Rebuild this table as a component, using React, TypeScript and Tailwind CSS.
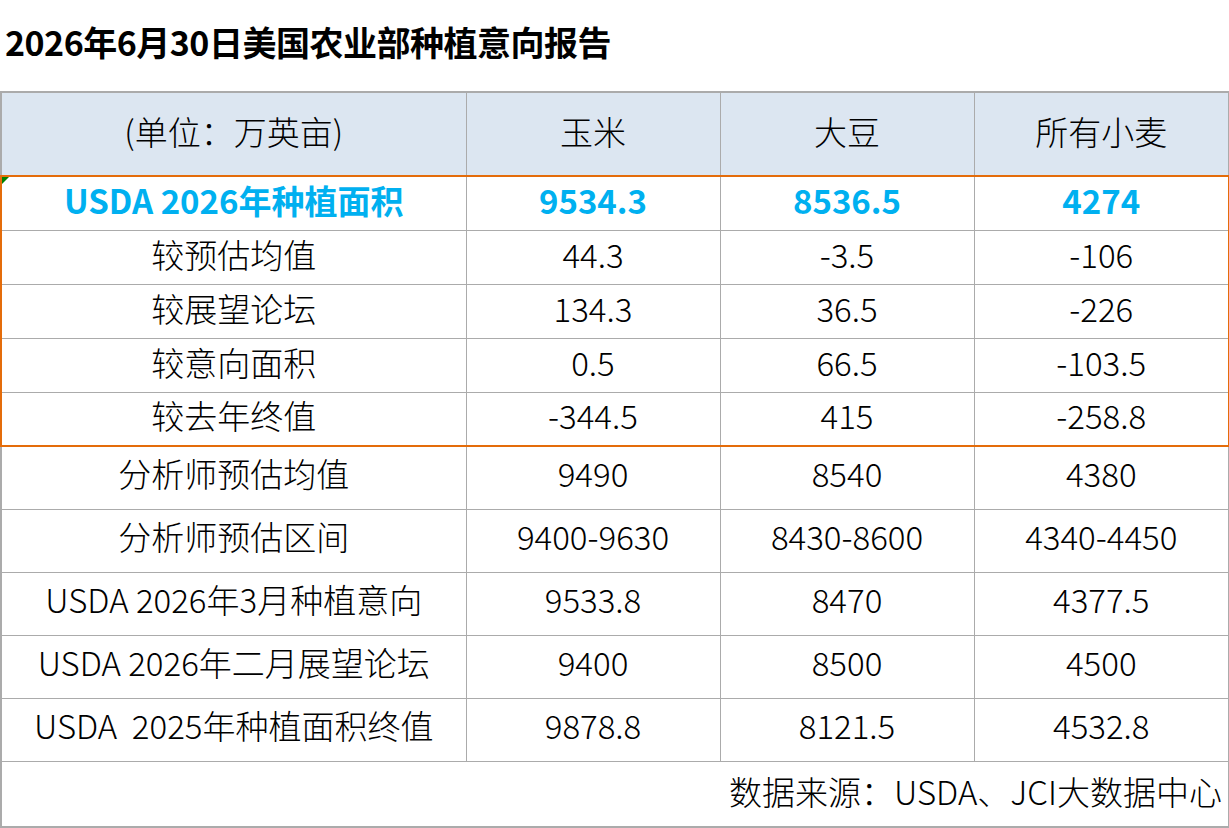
const orangeRows = [
  { label: "USDA 2026年种植面积", values: ["9534.3", "8536.5", "4274"], highlight: true },
  { label: "较预估均值", values: ["44.3", "-3.5", "-106"] },
  { label: "较展望论坛", values: ["134.3", "36.5", "-226"] },
  { label: "较意向面积", values: ["0.5", "66.5", "-103.5"] },
  { label: "较去年终值", values: ["-344.5", "415", "-258.8"] },
];

const otherRows = [
  { label: "分析师预估均值", values: ["9490", "8540", "4380"] },
  { label: "分析师预估区间", values: ["9400-9630", "8430-8600", "4340-4450"] },
  { label: "USDA 2026年3月种植意向", values: ["9533.8", "8470", "4377.5"] },
  { label: "USDA 2026年二月展望论坛", values: ["9400", "8500", "4500"] },
  { label: "USDA  2025年种植面积终值", values: ["9878.8", "8121.5", "4532.8"] },
];

export default function App() {
  return (
    <div className="w-[1229px] h-[828px] bg-white text-black font-['Noto_Sans_CJK_SC',sans-serif] overflow-hidden">
      <div className="h-[91px] flex items-center pl-[5px] pb-[7px]">
        <h1 className="text-[34px] font-bold leading-none tracking-[-0.5px]">2026年6月30日美国农业部种植意向报告</h1>
      </div>
      <table className="w-[1228px] table-fixed border-collapse border-2 border-[#ababab] text-[33px] leading-none font-light">
        <colgroup>
          <col className="w-[465px]" />
          <col className="w-[254px]" />
          <col className="w-[254px]" />
          <col className="w-[255px]" />
        </colgroup>
        <thead>
          <tr className="h-[84px] bg-[#dce6f1]">
            <th className="font-light pb-[6px] border border-[#ababab]">(单位：万英亩)</th>
            <th className="font-light pb-[6px] border border-[#ababab]">玉米</th>
            <th className="font-light pb-[6px] border border-[#ababab]">大豆</th>
            <th className="font-light pb-[6px] border border-[#ababab]">所有小麦</th>
          </tr>
        </thead>
        <tbody>
          {orangeRows.map((row, i) => {
            const top = i === 0 ? "border-t-2 border-t-[#e46c0a]" : "";
            const bottom = i === orangeRows.length - 1 ? "border-b-2 border-b-[#e46c0a]" : "";
            const text = row.highlight ? "text-[#00b0f0] font-bold" : "";
            return (
              <tr key={row.label} className="h-[54px]">
                <td className={`relative text-center pb-[6px] border border-[#ababab] border-l-2 border-l-[#e46c0a] ${top} ${bottom} ${text}`}>
                  {row.highlight && (
                    <span className="absolute left-0 top-0 w-0 h-0 border-t-[7px] border-t-[#008000] border-r-[7px] border-r-transparent" />
                  )}
                  {row.label}
                </td>
                {row.values.map((v, j) => (
                  <td
                    key={j}
                    className={`text-center pb-[6px] border border-[#ababab] ${top} ${bottom} ${text} ${j === 2 ? "border-r-2 border-r-[#e46c0a]" : ""}`}
                  >
                    {v}
                  </td>
                ))}
              </tr>
            );
          })}
          {otherRows.map((row) => (
            <tr key={row.label} className="h-[63px]">
              <td className="text-center pb-[8px] border border-[#ababab] whitespace-pre">{row.label}</td>
              {row.values.map((v, j) => (
                <td key={j} className="text-center pb-[8px] border border-[#ababab]">
                  {v}
                </td>
              ))}
            </tr>
          ))}
          <tr className="h-[66px]">
            <td colSpan={4} className="text-right pr-[6px] pb-[4px] border border-[#ababab]">
              数据来源：USDA、JCI大数据中心
            </td>
          </tr>
        </tbody>
      </table>
    </div>
  );
}
